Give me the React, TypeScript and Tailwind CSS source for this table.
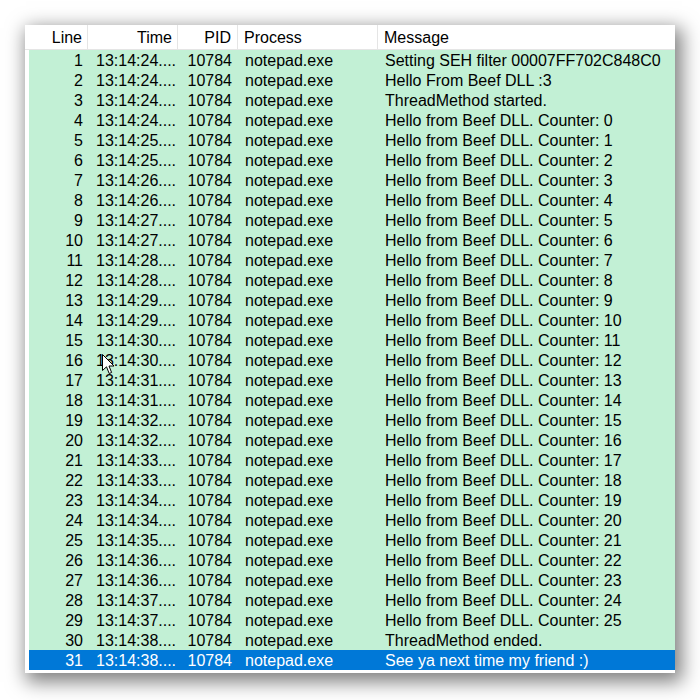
import React from "react";

type Row = { line: number; time: string; msg: string };

const secs = [24, 24, 24, 24, 25, 25, 26, 26, 27, 27, 28, 28, 29, 29, 30, 30, 31, 31, 32, 32, 33, 33, 34, 34, 35, 36, 36, 37, 37, 38, 38];

const rows: Row[] = secs.map((s, i) => {
    const line = i + 1;
    let msg = `Hello from Beef DLL. Counter: ${line - 4}`;
    if (line === 1) msg = "Setting SEH filter 00007FF702C848C0";
    if (line === 2) msg = "Hello From Beef DLL :3";
    if (line === 3) msg = "ThreadMethod started.";
    if (line === 30) msg = "ThreadMethod ended.";
    if (line === 31) msg = "See ya next time my friend :)";
    return { line, time: `13:14:${s}....`, msg };
});

const Cursor = () => (
    <svg className="absolute left-[102px] top-[354px]" width="13" height="21" viewBox="0 0 13 21">
        <path d="M0.5 0.5 L0.5 16.5 L4.5 12.8 L7.2 19.5 L9.6 18.5 L7 12 L12 12 Z" fill="#fff" stroke="#000" strokeWidth="1" />
    </svg>
);

export default function App() {
    return (
        <div className="relative w-[700px] h-[700px] bg-white font-['Liberation_Sans',Arial,sans-serif] text-[16px] text-black">
            <div className="absolute left-[25px] top-[25px] w-[650px] h-[648px] bg-white shadow-[4px_6px_18px_3px_rgba(0,0,0,0.5)]">
                <div className="flex h-[25px] border-b border-[#e5e5e5] pl-[4px]">
                    <div className="w-[59px] text-right pr-[5px] pt-[2px] leading-[22px] border-r border-[#e5e5e5]">Line</div>
                    <div className="w-[90px] text-right pr-[5px] pt-[2px] leading-[22px] border-r border-[#e5e5e5]">Time</div>
                    <div className="w-[60px] text-right pr-[6px] pt-[2px] leading-[22px] border-r border-[#e5e5e5]">PID</div>
                    <div className="w-[140px] pl-[6px] pt-[2px] leading-[22px] border-r border-[#e5e5e5]">Process</div>
                    <div className="flex-1 pl-[6px] pt-[2px] leading-[22px]">Message</div>
                </div>
                <div className="pl-[4px]">
                    {rows.map((r) => {
                        const sel = r.line === 31;
                        return (
                            <div
                                key={r.line}
                                className={
                                    sel
                                        ? "flex h-[20px] leading-[21px] bg-[#0078d7] text-white"
                                        : "flex h-[20px] leading-[21px] bg-[#c2f0d5]"
                                }
                            >
                                <div className="w-[59px] text-right pr-[5px]">{r.line}</div>
                                <div className="w-[90px] pl-[8px] whitespace-nowrap overflow-hidden">{r.time}</div>
                                <div className="w-[60px] text-right pr-[6px]">10784</div>
                                <div className="w-[140px] pl-[7px]">notepad.exe</div>
                                <div className="flex-1 pl-[7px] whitespace-nowrap overflow-hidden">{r.msg}</div>
                            </div>
                        );
                    })}
                </div>
            </div>
            <Cursor />
        </div>
    );
}
